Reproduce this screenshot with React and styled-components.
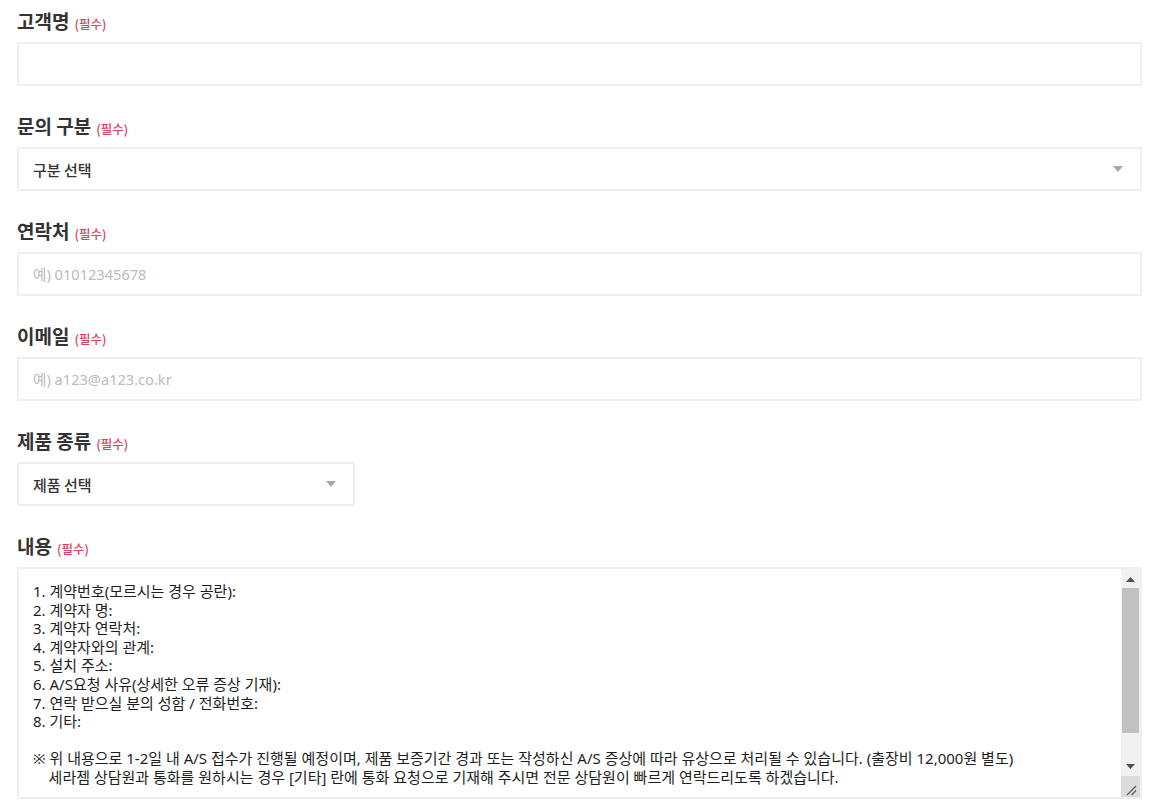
import React from 'react';
import styled, { createGlobalStyle } from 'styled-components';

const GlobalStyle = createGlobalStyle`
  html, body {
    margin: 0;
    padding: 0;
    background: #fff;
  }
  body {
    font-family: "Noto Sans", "Noto Sans CJK KR", sans-serif;
    color: #333;
  }
  * {
    box-sizing: border-box;
  }
`;

const Form = styled.form`
  display: flex;
  flex-direction: column;
  gap: 28px;
  padding: 9px 16px 0 17px;
`;

const Field = styled.div`
  display: flex;
  flex-direction: column;
  gap: 9px;
`;

const Label = styled.label`
  display: flex;
  align-items: baseline;
  gap: 5px;
  height: 24px;
  line-height: 24px;
  font-family: "Noto Sans CJK KR", sans-serif;
  font-size: 19px;
  font-weight: 700;
  color: #333;
`;

const Required = styled.span`
  font-size: 12.5px;
  font-weight: 500;
  color: #e0405f;
`;

const controlBase = `
  height: 44px;
  border: 2px solid #efefef;
  background: #fff;
  padding: 0 14px;
  font-family: "Noto Sans", "Noto Sans CJK KR", sans-serif;
  font-size: 14.6px;
  color: #333;
  outline: none;
  border-radius: 0;
`;

const TextInput = styled.input`
  ${controlBase}
  width: 100%;
  &::placeholder {
    color: #bbb;
  }
`;

const SelectWrap = styled.div`
  position: relative;
  width: ${({ $width }) => $width || '100%'};
`;

const Select = styled.select`
  ${controlBase}
  width: 100%;
  appearance: none;
  font-family: "Noto Sans CJK KR", sans-serif;
  font-size: 15px;
  font-weight: 500;
`;

const Caret = styled.svg`
  position: absolute;
  right: 19px;
  top: 19px;
  pointer-events: none;
`;

const AreaWrap = styled.div`
  position: relative;
`;

const TextArea = styled.textarea`
  ${controlBase}
  display: block;
  width: 100%;
  height: 232px;
  padding: 13px 35px 14px 14px;
  font-size: 15px;
  line-height: 18.6px;
  color: #1e1e1e;
  resize: none;
  overflow: hidden;
`;

/* textarea scrollbar, drawn over the field's right edge */
const ScrollBar = styled.div`
  position: absolute;
  top: 2px;
  right: 2px;
  bottom: 2px;
  width: 19px;
  display: flex;
  flex-direction: column;
  background: #f1f1f1;
`;

const ArrowButton = styled.div`
  height: 19px;
  flex: none;
  display: flex;
  align-items: center;
  justify-content: center;
  padding-top: ${({ $up }) => ($up ? '1px' : '0')};
`;

const Track = styled.div`
  flex: 1;
  padding: 0 1px;
`;

const Thumb = styled.div`
  height: 145px;
  background: #c1c1c1;
`;

const Corner = styled.div`
  height: 21px;
  flex: none;
  background: #dcdcdc;
  display: flex;
  align-items: flex-end;
  justify-content: flex-end;
`;

const contentText = `1. 계약번호(모르시는 경우 공란):
2. 계약자 명:
3. 계약자 연락처:
4. 계약자와의 관계:
5. 설치 주소:
6. A/S요청 사유(상세한 오류 증상 기재):
7. 연락 받으실 분의 성함 / 전화번호:
8. 기타:

※ 위 내용으로 1-2일 내 A/S 접수가 진행될 예정이며, 제품 보증기간 경과 또는 작성하신 A/S 증상에 따라 유상으로 처리될 수 있습니다. (출장비 12,000원 별도)
    세라젬 상담원과 통화를 원하시는 경우 [기타] 란에 통화 요청으로 기재해 주시면 전문 상담원이 빠르게 연락드리도록 하겠습니다.

`;

const CaretIcon = () => (
  <Caret width="10" height="6" viewBox="0 0 10 6">
    <path d="M0 0 H10 L5 6 Z" fill="#a8a8a8" />
  </Caret>
);

const FieldLabel = ({ children }) => (
  <Label>
    {children}
    <Required>(필수)</Required>
  </Label>
);

const FakeScrollBar = () => (
  <ScrollBar>
    <ArrowButton $up>
      <svg width="9" height="5" viewBox="0 0 9 5">
        <path d="M0 5 H9 L4.5 0 Z" fill="#505050" />
      </svg>
    </ArrowButton>
    <Track>
      <Thumb />
    </Track>
    <ArrowButton>
      <svg width="9" height="5" viewBox="0 0 9 5">
        <path d="M0 0 H9 L4.5 5 Z" fill="#505050" />
      </svg>
    </ArrowButton>
    <Corner>
      <svg width="19" height="21" viewBox="0 0 19 21">
        <path d="M6 19 L15 10 M10.5 19 L15 14.5" stroke="#5a5a5a" strokeWidth="1.3" fill="none" />
      </svg>
    </Corner>
  </ScrollBar>
);

const App = () => {
  return (
    <>
      <GlobalStyle />
      <Form onSubmit={(e) => e.preventDefault()}>
        <Field>
          <FieldLabel>고객명</FieldLabel>
          <TextInput type="text" />
        </Field>
        <Field>
          <FieldLabel>문의 구분</FieldLabel>
          <SelectWrap>
            <Select defaultValue="">
              <option value="">구분 선택</option>
            </Select>
            <CaretIcon />
          </SelectWrap>
        </Field>
        <Field>
          <FieldLabel>연락처</FieldLabel>
          <TextInput type="tel" placeholder="예) 01012345678" />
        </Field>
        <Field>
          <FieldLabel>이메일</FieldLabel>
          <TextInput type="email" placeholder="예) a123@a123.co.kr" />
        </Field>
        <Field>
          <FieldLabel>제품 종류</FieldLabel>
          <SelectWrap $width="338px">
            <Select defaultValue="">
              <option value="">제품 선택</option>
            </Select>
            <CaretIcon />
          </SelectWrap>
        </Field>
        <Field>
          <FieldLabel>내용</FieldLabel>
          <AreaWrap>
            <TextArea defaultValue={contentText} />
            <FakeScrollBar />
          </AreaWrap>
        </Field>
      </Form>
    </>
  );
};

export default App;
